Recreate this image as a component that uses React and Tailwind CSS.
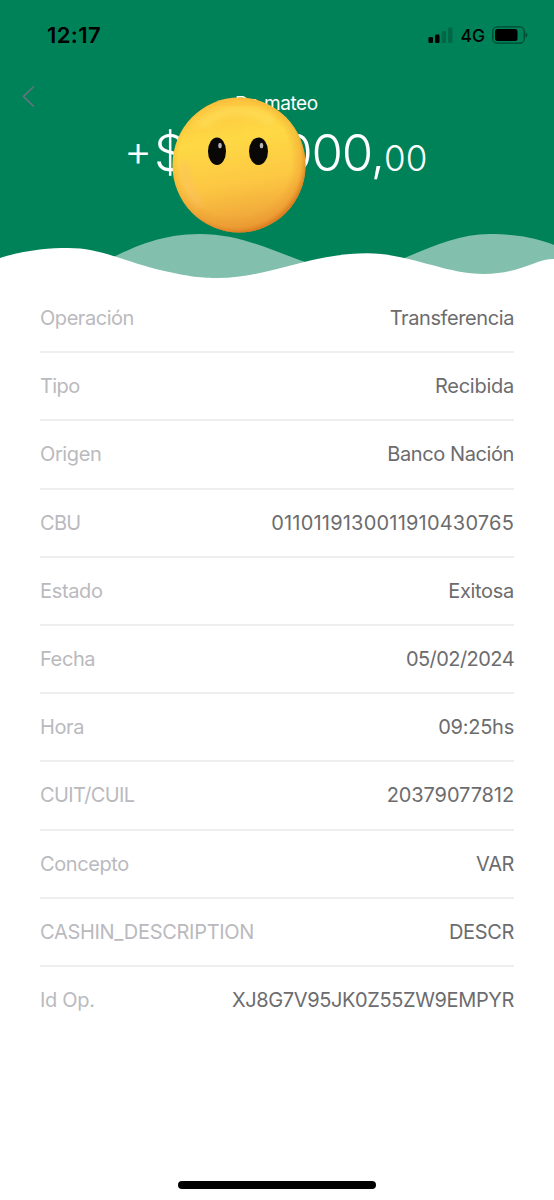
const details = [
    { label: 'Operación', value: 'Transferencia', labelTracking: 'tracking-[-0.45px]', valueTracking: 'tracking-[-0.4px]' },
    { label: 'Tipo', value: 'Recibida', labelTracking: 'tracking-[-0.6px]', valueTracking: 'tracking-[-0.25px]' },
    { label: 'Origen', value: 'Banco Nación', labelTracking: 'tracking-[-0.4px]', valueTracking: 'tracking-[-0.4px]' },
    { label: 'CBU', value: '0110119130011910430765', labelTracking: 'tracking-[-0.7px]', valueTracking: 'tracking-[0.2px]' },
    { label: 'Estado', value: 'Exitosa', labelTracking: 'tracking-[-0.35px]', valueTracking: 'tracking-[-0.3px]' },
    { label: 'Fecha', value: '05/02/2024', labelTracking: 'tracking-[-0.4px]', valueTracking: 'tracking-[-0.55px]' },
    { label: 'Hora', value: '09:25hs', labelTracking: 'tracking-[-0.4px]', valueTracking: 'tracking-[-0.25px]' },
    { label: 'CUIT/CUIL', value: '20379077812', labelTracking: 'tracking-[-0.65px]', valueTracking: 'tracking-[-0.1px]' },
    { label: 'Concepto', value: 'VAR', labelTracking: 'tracking-[-0.4px]', valueTracking: 'tracking-[-0.4px]' },
    { label: 'CASHIN_DESCRIPTION', value: 'DESCR', labelTracking: 'tracking-[-0.3px]', valueTracking: 'tracking-[-0.35px]' },
    { label: 'Id Op.', value: 'XJ8G7V95JK0Z55ZW9EMPYR', labelTracking: 'tracking-[-0.3px]', valueTracking: 'tracking-[-0.38px]' }
];

function StatusBar() {
    return (
        <div className="flex h-[70px] items-center justify-between pl-[47px] pr-[26px] text-black">
            <span className="text-[22px] font-semibold leading-none tracking-[0.4px]">12:17</span>
            <div className="flex items-center">
                <svg width="26" height="18" viewBox="0 0 26 18">
                    <rect x="0.5" y="11" width="4.5" height="6" rx="1.2" />
                    <rect x="7" y="8.5" width="4.5" height="8.5" rx="1.2" />
                    <rect x="13.5" y="5" width="4.5" height="12" rx="1.2" opacity="0.2" />
                    <rect x="20" y="1.5" width="4.5" height="15.5" rx="1.2" opacity="0.2" />
                </svg>
                <span className="ml-[6px] mt-[2px] text-[17.5px] font-medium leading-none">4G</span>
                <svg className="ml-[7px]" width="36" height="18" viewBox="0 0 36 18">
                    <rect x="0.8" y="0.8" width="31.4" height="16.4" rx="4.5" fill="none" stroke="#000" strokeWidth="1.3" opacity="0.45" />
                    <rect x="3" y="3" width="22.5" height="12" rx="2.5" />
                    <path d="M33.6 6.5c2.2.8 2.2 4.2 0 5z" opacity="0.5" />
                </svg>
            </div>
        </div>
    );
}

function FaceEmoji({ className }) {
    return (
        <svg className={className} width="134" height="136" viewBox="0 0 134 136">
            <defs>
                <linearGradient id="skin" x1="0.42" y1="0" x2="0.58" y2="1">
                    <stop offset="0" stopColor="#fdc43f" />
                    <stop offset="0.3" stopColor="#fed944" />
                    <stop offset="0.62" stopColor="#fdc843" />
                    <stop offset="1" stopColor="#eb9c37" />
                </linearGradient>
                <radialGradient id="rim" cx="0.47" cy="0.46" r="0.54">
                    <stop offset="0.78" stopColor="#e58a24" stopOpacity="0" />
                    <stop offset="0.92" stopColor="#e8912b" stopOpacity="0.35" />
                    <stop offset="1" stopColor="#d9771c" stopOpacity="0.85" />
                </radialGradient>
                <filter id="soft" x="-30%" y="-30%" width="160%" height="160%">
                    <feGaussianBlur stdDeviation="3.5" />
                </filter>
            </defs>
            <ellipse cx="67" cy="68" rx="66.5" ry="67.5" fill="url(#skin)" />
            <ellipse cx="67" cy="68" rx="66.5" ry="67.5" fill="url(#rim)" />
            <path d="M30 27Q62 2 98 23" fill="none" stroke="#ffe564" strokeWidth="8" strokeLinecap="round" opacity="0.6" filter="url(#soft)" />
            <path d="M12 68Q13 90 26 107" fill="none" stroke="#f9bf6c" strokeWidth="7" strokeLinecap="round" opacity="0.55" filter="url(#soft)" />
            <ellipse cx="45" cy="54.3" rx="9" ry="13.7" fill="#0a0806" />
            <ellipse cx="86.5" cy="54.3" rx="9.5" ry="13.7" fill="#0a0806" />
            <ellipse cx="48" cy="48.5" rx="1.8" ry="2.8" fill="#b5b5b5" />
            <ellipse cx="89.5" cy="48.5" rx="1.8" ry="2.8" fill="#b5b5b5" />
        </svg>
    );
}

function Waves() {
    return (
        <svg className="block" width="554" height="54" viewBox="0 0 554 54">
            <path d="M90 36C115 30 145 4 200 4C245 4 280 25 315 35V50H90Z" fill="#82c0ad" />
            <path d="M390 34C425 20 455 4 490 4C518 4 540 9 554 15V50H390Z" fill="#82c0ad" />
            <path
                d="M0 28C25 20 50 18 68 18C100 18 120 30 160 40C190 47 202 48 218 48C268 48 310 23.3 367 23.3C410 23.5 445 44 484 44C520 44 535 29 554 29V54H0Z"
                fill="#fff"
            />
        </svg>
    );
}

function Header() {
    return (
        <header className="relative flex h-[285px] flex-col bg-[#008259]">
            <StatusBar />
            <div className="flex h-[160px] flex-col">
                <div className="flex h-[52px] items-start pl-[22px] pt-[15px]">
                    <svg width="13" height="23" viewBox="0 0 13 23" fill="none" stroke="#697080" strokeWidth="1.7">
                        <path d="M11.8 1.5L1.5 11.5L11.8 21.5" />
                    </svg>
                    <span className="ml-[200px] mt-[7px] text-[19px] leading-[24px] tracking-[-0.4px] text-white">De mateo</span>
                </div>
                <div className="flex items-baseline pl-[124px] font-[350] leading-[62px] text-white">
                    <span className="w-[30px] pb-[5px] text-[43px] leading-none -translate-y-[5px]">+</span>
                    <span className="text-[51px]">$</span>
                    <span className="ml-[95px] text-[51px] tracking-[-1.2px]">000,</span>
                    <span className="text-[35px]">00</span>
                </div>
            </div>
            <FaceEmoji className="absolute left-[172px] top-[97px]" />
            <Waves />
            <div className="flex-1 bg-white" />
        </header>
    );
}

function DetailRow({ label, value, labelTracking, valueTracking }) {
    return (
        <div className="flex h-[68.2px] items-center justify-between border-b-2 border-[#eeeef0] text-[20px] last:border-transparent">
            <span className={`text-[#bababe] ${labelTracking}`}>{label}</span>
            <span className={`text-[#6c6c6e] ${valueTracking}`}>{value}</span>
        </div>
    );
}

export default function App() {
    return (
        <div className="flex h-[1200px] w-[554px] flex-col overflow-hidden bg-white font-['Inter',sans-serif]">
            <Header />
            <main className="flex-1 px-[40px]">
                {details.map((item) => (
                    <DetailRow key={item.label} {...item} />
                ))}
            </main>
            <div className="mx-auto mb-[11px] h-[8px] w-[198px] rounded-full bg-black" />
        </div>
    );
}
